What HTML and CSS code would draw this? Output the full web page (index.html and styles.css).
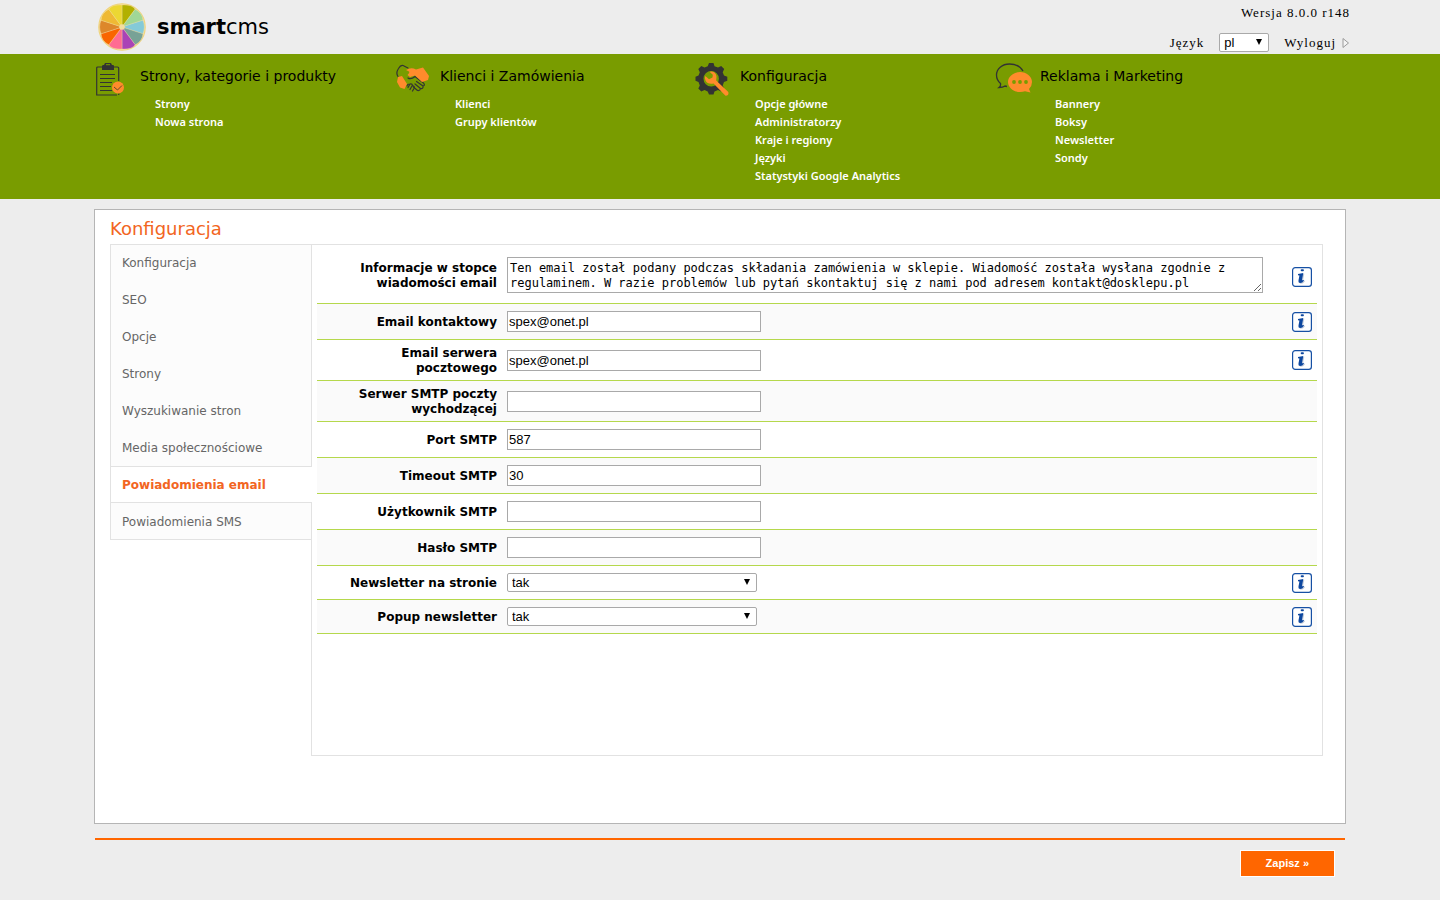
FILE: index.html
```html
<!DOCTYPE html>
<html lang="pl">
<head>
<meta charset="utf-8">
<title>smartcms – Konfiguracja</title>
<link rel="stylesheet" href="styles.css">
</head>
<body>
<svg class="sprite" aria-hidden="true">
  <symbol id="info" viewBox="0 0 20 20">
    <rect x=".6" y=".6" width="18.8" height="18.8" rx="2.6" fill="#fff" stroke="#1650a4" stroke-width="1.2"/>
    <path d="M7.200 7.600 12.300 6.800 10.800 14.200Q11.600 14.200 12.600 13.400L13 14.200Q11 17 8.600 16.800 7 16.500 7.600 14.500Z" fill="#c3cbd9"/>
    <path d="M6 6.900 11.300 6.100 9.900 13.300Q10.500 13.500 11.400 12.700L12 13.500Q10.200 16.200 7.900 16 5.900 15.700 6.500 13.300L7.500 8.400 6 8.200Z" fill="#0d479f"/>
    <rect x="8.700" y="2.200" width="3.200" height="2" rx=".9" fill="#0d479f"/>
  </symbol>
</svg>

<header class="top wrap">
  <a class="logo" href="#">
    <svg width="48" height="48" viewBox="0 0 48 48" aria-hidden="true">
      <circle cx="24" cy="24" r="23.200" fill="#f7e6b4" stroke="#f0d47c" stroke-width="1.200"/>
      <g stroke="#efdca4" stroke-width=".35" stroke-linejoin="round">
        <path fill="#b2b000" d="M24 24V2Q34 1.300 37.200 6.200Z"/>
        <path fill="#a0d796" d="M24 24 37.200 6.200Q44.500 10 45 17.200Z"/>
        <path fill="#84cad8" d="M24 24 45 17.200Q47.800 24 45 30.800Z"/>
        <path fill="#78a296" d="M24 24 45 30.800Q44.500 38 37.200 41.800Z"/>
        <path fill="#aa43b6" d="M24 24 37.200 41.800Q34 46.700 24 46Z"/>
        <path fill="#ff6c92" d="M24 24V46Q14 46.700 10.800 41.800Z"/>
        <path fill="#f96500" d="M24 24 10.800 41.800Q3.500 38 3 30.800Z"/>
        <path fill="#dd872b" d="M24 24 3 30.800Q.2 24 3 17.200Z"/>
        <path fill="#efb934" d="M24 24 3 17.200Q3.500 10 10.800 6.200Z"/>
        <path fill="#ecd733" d="M24 24 10.800 6.200Q14 1.300 24 2Z"/>
      </g>
      <circle cx="24" cy="24" r="2.800" fill="#f2dda0"/>
    </svg>
    <span><b>smart</b>cms</span>
  </a>
  <div class="account">
    <div>Wersja 8.0.0 r148</div>
    <div class="account-row">
      <label for="lang">Język</label>
      <span class="select lang"><select id="lang"><option>pl</option><option>en</option></select></span>
      <a class="logout" href="#">Wyloguj <svg width="8" height="12" viewBox="0 0 8 12" aria-hidden="true"><path d="M1 1.500 6.500 6 1 10.500Z" fill="#f4f4f4" stroke="#9a9a9a"/></svg></a>
    </div>
  </div>
</header>

<nav class="nav">
  <div class="nav-cols wrap">
    <section>
      <h2><svg width="32" height="36" viewBox="0 0 32 36" aria-hidden="true">
        <g fill="none" stroke="#333" stroke-width="1.200"><path d="M7 5H2.700Q1.700 5 1.700 6V33H22M19 5H22.500Q23.700 5 23.700 6V19M23.700 31.500V33"/><path d="M5 12.500H20M5 16.500H20M5 20.500H17M5 24.500H16M5 28.500H17"/></g>
        <path d="M7 8V4.300Q7 3 8.300 3H9L10 1H16L17 3H18Q19 3 19 4.300V8Z" fill="#333"/><path d="M11 2.700H15" stroke="#799c00"/>
        <circle cx="23" cy="25.500" r="6" fill="#ff8b2c"/><path d="M19 25 22.500 28 27 23.500" fill="none" stroke="#654b28"/>
      </svg>Strony, kategorie i produkty</h2>
      <ul><li><a href="#">Strony</a></li><li><a href="#">Nowa strona</a></li></ul>
    </section>
    <section>
      <h2><svg width="36" height="36" viewBox="0 0 36 36" aria-hidden="true">
        <g fill="none" stroke="#333" stroke-width="1.200" stroke-linecap="round" stroke-linejoin="round">
          <path d="M3 14.500Q.5 11 3.500 6.500 5.500 3 8 3.500L13 6"/>
          <path d="M13 16Q16 18 20 14.500L28.500 21Q30.500 23.500 28 24L21.500 19.500M28 24Q28.500 27 25.500 26.500L20 22M25.500 26.500Q25 29 22.500 28.500L18.500 25"/>
          <path d="M12 24Q12 22 15 22L13 25.500M15 22Q18 21.500 17 24L15 27.500M17 24Q20 23.500 19 26.500L17.500 29"/>
        </g>
        <path d="M3 15 7 14 12 22 9.500 27 5 25.500 2 20Z" fill="#ff8b2c"/><path d="M11 8Q16 5 21 7.500L28 5.500 34 14 33 18 27 20 20 13.500 15 15 12.500 13Q15 10.500 14 9.500Z" fill="#ff8b2c"/>
      </svg>Klienci i Zamówienia</h2>
      <ul><li><a href="#">Klienci</a></li><li><a href="#">Grupy klientów</a></li></ul>
    </section>
    <section>
      <h2><svg width="36" height="36" viewBox="0 0 36 36" aria-hidden="true">
        <path fill="#333" fill-rule="evenodd" d="M14 1H18.500L19.500 4.200 23 5.600 26.200 4 29.200 7 27.700 10.200 29 13.500 32.300 14.800V18.800L29 20 27.700 23.500 29.200 26.500 26.200 29.500 23 28 19.500 29.400 18.500 32.500H14L12.700 29.400 9.500 28 6.300 29.500 3.300 26.500 4.800 23.500 3.500 20 .5 18.800V14.800L3.500 13.500 4.800 10.200 3.300 7 6.300 4 9.500 5.600 12.700 4.200ZM16.200 9A7.700 7.700 0 1 0 16.200 24.400 7.700 7.700 0 1 0 16.200 9Z"/>
        <path fill="#ff8b2c" d="M14.500 9.700Q20.500 8.700 21.500 14.500L21.200 18.500 33.300 30Q34.300 33.500 30.500 33.700L18.500 21.500Q12.500 22.500 10.500 18.500 9.300 16 10.300 14L14 17.300 17.500 15.500 17.800 12.800Z"/>
      </svg>Konfiguracja</h2>
      <ul><li><a href="#">Opcje główne</a></li><li><a href="#">Administratorzy</a></li><li><a href="#">Kraje i regiony</a></li><li><a href="#">Języki</a></li><li><a href="#">Statystyki Google Analytics</a></li></ul>
    </section>
    <section>
      <h2><svg width="38" height="36" viewBox="0 0 38 36" aria-hidden="true">
        <path d="M28 9Q24 2 14.500 2C7 2 1.500 7 1.500 13Q1.500 18 5.500 21.500 6 24 4 25.500 8 25.500 10 24L12 24.500" fill="none" stroke="#333" stroke-width="1.300"/>
        <path d="M25 10C31.500 10 37 14.500 37 20Q37 24 34 27L35.500 30.500 30 29.200Q28 30 25 30C18.500 30 13 25.500 13 20S18.500 10 25 10Z" fill="#ff8b2c"/><g fill="#799c00"><circle cx="19" cy="20" r="1.900"/><circle cx="25" cy="20" r="1.900"/><circle cx="31" cy="20" r="1.900"/></g>
      </svg>Reklama i Marketing</h2>
      <ul><li><a href="#">Bannery</a></li><li><a href="#">Boksy</a></li><li><a href="#">Newsletter</a></li><li><a href="#">Sondy</a></li></ul>
    </section>
  </div>
</nav>

<form class="wrap" onsubmit="return false">
  <main class="panel">
    <h1>Konfiguracja</h1>
    <div class="columns">
      <ul class="tabs">
        <li><a href="#">Konfiguracja</a></li>
        <li><a href="#">SEO</a></li>
        <li><a href="#">Opcje</a></li>
        <li><a href="#">Strony</a></li>
        <li><a href="#">Wyszukiwanie stron</a></li>
        <li><a href="#">Media społecznościowe</a></li>
        <li class="active"><a href="#">Powiadomienia email</a></li>
        <li><a href="#">Powiadomienia SMS</a></li>
      </ul>
      <div class="content">
        <div class="row row-tall"><label for="foot">Informacje w stopce wiadomości email</label><textarea id="foot" rows="2" spellcheck="false">Ten email został podany podczas składania zamówienia w sklepie. Wiadomość została wysłana zgodnie z regulaminem. W razie problemów lub pytań skontaktuj się z nami pod adresem kontakt@dosklepu.pl</textarea><svg class="info"><use href="#info"/></svg></div>
        <div class="row"><label for="mail">Email kontaktowy</label><input id="mail" type="text" value="spex@onet.pl"><svg class="info"><use href="#info"/></svg></div>
        <div class="row"><label for="srv">Email serwera pocztowego</label><input id="srv" type="text" value="spex@onet.pl"><svg class="info"><use href="#info"/></svg></div>
        <div class="row"><label for="smtp">Serwer SMTP poczty wychodzącej</label><input id="smtp" type="text"></div>
        <div class="row"><label for="port">Port SMTP</label><input id="port" type="text" value="587"></div>
        <div class="row"><label for="time">Timeout SMTP</label><input id="time" type="text" value="30"></div>
        <div class="row"><label for="user">Użytkownik SMTP</label><input id="user" type="text"></div>
        <div class="row"><label for="pass">Hasło SMTP</label><input id="pass" type="password"></div>
        <div class="row"><label for="news">Newsletter na stronie</label><span class="select"><select id="news"><option>tak</option><option>nie</option></select></span><svg class="info"><use href="#info"/></svg></div>
        <div class="row"><label for="popup">Popup newsletter</label><span class="select"><select id="popup"><option>tak</option><option>nie</option></select></span><svg class="info"><use href="#info"/></svg></div>
      </div>
    </div>
  </main>
  <div class="actions"><button type="submit">Zapisz »</button></div>
</form>
</body>
</html>
```
FILE: styles.css
```css
* { box-sizing: border-box; }
body {
  margin: 0;
  background: #ededed;
  color: #000;
  font: 12px/15px "DejaVu Sans", sans-serif;
}
a { color: inherit; text-decoration: none; }
ul { list-style: none; margin: 0; padding: 0; }
h1, h2 { margin: 0; font-weight: normal; }
.sprite { display: none; }
.wrap { max-width: 1252px; margin: 0 auto; }

.top {
  height: 54px;
  display: flex;
  justify-content: space-between;
}
.logo {
  display: flex;
  align-items: center;
  gap: 11px;
  padding-left: 4px;
  font-size: 21px;
  line-height: 24px;
}
.account {
  display: flex;
  flex-direction: column;
  justify-content: space-between;
  align-items: flex-end;
  padding: 5px 0 2px;
  margin-right: -4px;
  font: 13px/16px "Liberation Serif", serif;
  letter-spacing: 1px;
}
.account-row { display: flex; align-items: center; gap: 15px; }
.logout { display: flex; align-items: center; gap: 6px; }

.select { position: relative; display: inline-block; width: 250px; }
.select::after {
  content: "";
  position: absolute;
  right: 7px;
  top: 6px;
  border: solid transparent;
  border-width: 6px 3px 0;
  border-top-color: #000;
  pointer-events: none;
}
select {
  appearance: none;
  display: block;
  width: 100%;
  height: 19px;
  margin: 0;
  padding: 0 4px;
  border: 1px solid #a9a9a9;
  border-radius: 2px;
  background: #fff;
  color: #000;
  font: 13px/16px "Liberation Sans", sans-serif;
}
.lang { width: 50px; }

.nav { background: #799c00; color: #000; }
.nav-cols {
  display: grid;
  grid-template-columns: repeat(4, minmax(0, 300px));
  padding: 8px 1px 14px;
}
.nav h2 {
  display: grid;
  grid-template-columns: 45px 1fr;
  font-size: 14px;
  line-height: 28px;
  height: 33px;
}
.nav ul { padding-left: 60px; }
.nav li {
  color: #fff;
  font: 600 11px/18px "Noto Sans", sans-serif;
}

.panel {
  margin-top: 10px;
  padding: 10px 22px 67px 15px;
  background: #fff;
  border: 1px solid #b5b5b5;
}
h1 { font-size: 18px; line-height: 18px; padding-bottom: 6px; color: #f26522; }
.columns { display: flex; align-items: flex-start; }
.tabs {
  width: 201px;
  flex: none;
  border: solid #e2e2e2;
  border-width: 1px 0 0 1px;
  color: #666;
}
.tabs li {
  background: #fcfcfc;
  padding: 11px 11px 10px;
  border-bottom: 1px solid transparent;
}
.tabs li:nth-last-child(3) { border-bottom-color: #e2e2e2; }
.tabs li:last-child {
  padding-top: 12px;
  padding-bottom: 9px;
  border-bottom-color: #e2e2e2;
}
.tabs .active {
  position: relative;
  margin-right: -1px;
  padding-bottom: 9px;
  background: #fff;
  border-bottom-color: #e2e2e2;
  color: #f26522;
  font-weight: bold;
}
.content {
  flex: 1;
  min-width: 0;
  min-height: 512px;
  padding: 5px;
  border: 1px solid #e2e2e2;
}
.row {
  display: grid;
  grid-template-columns: 180px minmax(0, 756px) 20px;
  justify-content: start;
  align-items: center;
  column-gap: 10px;
  padding: 5px;
  padding-left: 0;
  border-bottom: 1px solid #b5d84c;
}
.row:nth-child(even) { background: #fafafa; }
.row-tall { padding-top: 7px; padding-bottom: 10px; }
.row label {
  padding: 1px 0 0 20px;
  margin-bottom: -1px;
  text-align: right;
  font-weight: bold;
}
.row input {
  width: 254px;
  height: 21px;
  margin: 2px 0;
  padding: 1px;
  border: 1px solid #a9a9a9;
  background: #fff;
  color: #000;
  font: 13px/16px "Liberation Sans", sans-serif;
}
.row .select { margin: 2px 0; }
textarea {
  display: block;
  width: 100%;
  height: 36px;
  margin: 0;
  padding: 3px 2px 0;
  border: 1px solid #a9a9a9;
  background: #fff;
  color: #000;
  font: 12px/15px "DejaVu Sans Mono", monospace;
  overflow: hidden;
}
.info { width: 20px; height: 20px; margin-left: 19px; }
.row-tall .info { margin-top: 3px; }

.actions {
  margin: 14px 1px 0;
  padding: 10px;
  border-top: 2px solid #f60;
  text-align: right;
}
.actions button {
  padding: 5px 25px;
  border: 1px solid #fff;
  background: #f60;
  color: #fff;
  font: bold 11px/15px "Liberation Sans", sans-serif;
}
```
